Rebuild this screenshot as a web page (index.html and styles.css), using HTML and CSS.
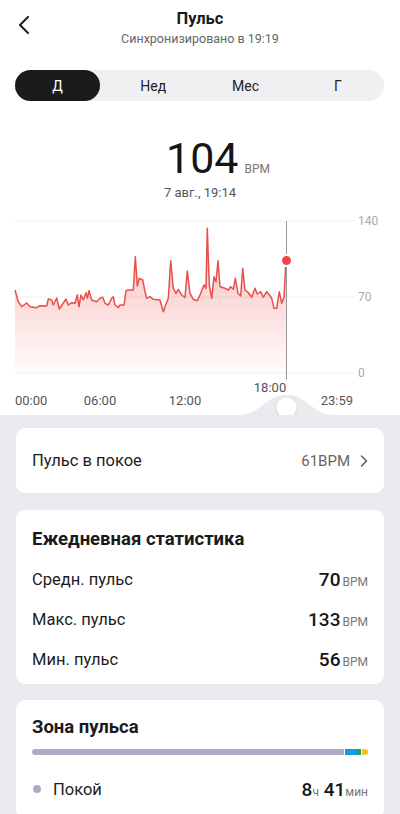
FILE: index.html
```html
<!DOCTYPE html>
<html lang="ru">
<head>
  <meta charset="UTF-8" />
  <meta name="viewport" content="width=device-width, initial-scale=1.0"/>
  <title>Пульс</title>
  <link rel="stylesheet" href="styles.css">
</head>
<body>
  <div class="top">
    <div class="header">
      <button class="back" aria-label="Назад">
        <svg width="12" height="18" viewBox="0 0 12 18"><path d="M10 1 L2 9 L10 17" fill="none" stroke="#1a1a1a" stroke-width="2" stroke-linecap="round" stroke-linejoin="round"/></svg>
      </button>
      <div class="titles">
        <div class="title">Пульс</div>
        <div class="subtitle">Синхронизировано в 19:19</div>
      </div>
      <div></div>
    </div>

    <div class="tabs">
      <div class="tab active">Д</div>
      <div class="tab">Нед</div>
      <div class="tab">Мес</div>
      <div class="tab">Г</div>
    </div>

    <div class="current">
      <div class="big">104<span class="unit">BPM</span></div>
      <div class="date">7 авг., 19:14</div>
    </div>

    <svg class="chart" width="400" height="214" viewBox="0 201 400 214">
      <defs>
        <linearGradient id="fill" x1="0" y1="221" x2="0" y2="373" gradientUnits="userSpaceOnUse">
          <stop offset="0" stop-color="#ef524e" stop-opacity="0.42"/>
          <stop offset="1" stop-color="#ef524e" stop-opacity="0.02"/>
        </linearGradient>
        <filter id="shadow" x="-50%" y="-50%" width="200%" height="200%">
          <feDropShadow dx="0" dy="1" stdDeviation="1.5" flood-color="#000" flood-opacity="0.15"/>
        </filter>
      </defs>
      <line x1="15" y1="221" x2="354" y2="221" class="grid"/>
      <line x1="15" y1="297" x2="354" y2="297" class="grid"/>
      <line x1="15" y1="373" x2="354" y2="373" class="grid"/>
      <text x="358" y="225" class="ylabel">140</text>
      <text x="358" y="301" class="ylabel">70</text>
      <text x="358" y="377" class="ylabel">0</text>

      <path fill="url(#fill)" d="M15,290 L18.3,301.7 L21.7,306.7 L26.7,303 L30,306.7 L36.7,307.7 L40,305.7 L46.7,306 L48.3,299 L51.7,300 L53.3,305 L56.7,298 L59.3,309 L63.3,303 L66,299 L68.3,305 L71.7,302.7 L75,303.3 L77.3,295 L79,306.7 L81,295 L83.3,300 L86,292.7 L87.3,298.3 L89,290.7 L91.7,300 L96.7,301.7 L100,298.3 L102.7,297.3 L105,303.3 L108.3,305 L111.7,298.3 L113.3,296.7 L115,305 L118.3,307.7 L120,305 L124,305 L126,290.7 L128.3,290 L133.3,290 L135.3,256.7 L137.3,286 L139.3,278.3 L142.7,280 L145,291.7 L146.7,298.3 L150,296.7 L153.3,299.3 L160,300 L163.3,311.7 L165,306.7 L168.3,298.3 L170.7,260.7 L173.3,288.3 L176,293.3 L178.3,289.3 L181.7,295 L185,297.3 L187.3,271 L190,293.3 L193.3,299.3 L197.3,300.7 L200,295 L201.7,290.7 L204,285 L206,288.3 L207.3,228.3 L209.3,285 L211.7,298.3 L214,276.7 L216,281.7 L218,260.7 L220,286.7 L225,288.3 L228.3,290 L230.7,286.7 L233.3,289.3 L235.3,278.3 L238,293.3 L240.7,296 L242.7,268.3 L245,290 L248.3,292.7 L251.7,297.3 L255,288.3 L257.3,294 L260.7,291.7 L263.3,297.3 L266.7,291.7 L269.3,295 L271.7,298.3 L274,308.3 L276.7,308.3 L279.3,291.7 L281.7,303.3 L284,297.3 L286,266.7 L286,373 L15,373 Z"/>
      <polyline class="line" points="15,290 18.3,301.7 21.7,306.7 26.7,303 30,306.7 36.7,307.7 40,305.7 46.7,306 48.3,299 51.7,300 53.3,305 56.7,298 59.3,309 63.3,303 66,299 68.3,305 71.7,302.7 75,303.3 77.3,295 79,306.7 81,295 83.3,300 86,292.7 87.3,298.3 89,290.7 91.7,300 96.7,301.7 100,298.3 102.7,297.3 105,303.3 108.3,305 111.7,298.3 113.3,296.7 115,305 118.3,307.7 120,305 124,305 126,290.7 128.3,290 133.3,290 135.3,256.7 137.3,286 139.3,278.3 142.7,280 145,291.7 146.7,298.3 150,296.7 153.3,299.3 160,300 163.3,311.7 165,306.7 168.3,298.3 170.7,260.7 173.3,288.3 176,293.3 178.3,289.3 181.7,295 185,297.3 187.3,271 190,293.3 193.3,299.3 197.3,300.7 200,295 201.7,290.7 204,285 206,288.3 207.3,228.3 209.3,285 211.7,298.3 214,276.7 216,281.7 218,260.7 220,286.7 225,288.3 228.3,290 230.7,286.7 233.3,289.3 235.3,278.3 238,293.3 240.7,296 242.7,268.3 245,290 248.3,292.7 251.7,297.3 255,288.3 257.3,294 260.7,291.7 263.3,297.3 266.7,291.7 269.3,295 271.7,298.3 274,308.3 276.7,308.3 279.3,291.7 281.7,303.3 284,297.3 286,260"/>

      <line x1="286.5" y1="221" x2="286.5" y2="380" class="cursor"/>
      <circle cx="286.5" cy="260.5" r="5.5" fill="#f04646" stroke="#fff" stroke-width="2"/>

      <text x="15" y="405" class="xlabel">00:00</text>
      <text x="100" y="405" class="xlabel" text-anchor="middle">06:00</text>
      <text x="185" y="405" class="xlabel" text-anchor="middle">12:00</text>
      <text x="270" y="392" class="xlabel" text-anchor="middle">18:00</text>
      <text x="353" y="405" class="xlabel" text-anchor="end">23:59</text>

      <path d="M238,415 C262,415 264,395 286.5,395 C309,395 311,415 335,415 Z" fill="#ebebef"/>
      <circle cx="286.5" cy="407.5" r="10" fill="#fff" filter="url(#shadow)"/>
    </svg>
  </div>

  <div class="cards">
    <div class="card row-card">
      <span class="label">Пульс в покое</span>
      <span class="link">61BPM
        <svg width="8" height="12" viewBox="0 0 8 12"><path d="M1.5 1 L6.5 6 L1.5 11" fill="none" stroke="#555" stroke-width="1.4" stroke-linecap="round" stroke-linejoin="round"/></svg>
      </span>
    </div>

    <div class="card stats">
      <div class="card-title">Ежедневная статистика</div>
      <div class="stat"><span class="label">Средн. пульс</span><span class="value">70<small>BPM</small></span></div>
      <div class="stat"><span class="label">Макс. пульс</span><span class="value">133<small>BPM</small></span></div>
      <div class="stat"><span class="label">Мин. пульс</span><span class="value">56<small>BPM</small></span></div>
    </div>

    <div class="card zones">
      <div class="card-title">Зона пульса</div>
      <div class="zone-bar">
        <span class="z-rest"></span>
        <span class="z-blue"></span>
        <span class="z-green"></span>
        <span class="z-yellow"></span>
      </div>
      <div class="stat">
        <span class="label"><i class="dot"></i>Покой</span>
        <span class="value">8<small class="tight">ч</small> 41<small class="tight">мин</small></span>
      </div>
    </div>
  </div>
</body>
</html>
```

FILE: styles.css
```css
* {
  box-sizing: border-box;
}
body {
  margin: 0;
  font-family: Roboto, "Noto Sans", sans-serif;
  background-color: #ebebef;
  color: #1a1a1a;
}
.top {
  background: #ffffff;
}
.header {
  display: grid;
  grid-template-columns: 48px 1fr 48px;
  padding-top: 8px;
}
.back {
  border: none;
  background: none;
  padding: 0;
  height: 22px;
  display: flex;
  align-items: flex-end;
  justify-content: center;
  margin-top: 4px;
}
.titles {
  text-align: center;
}
.title {
  font-size: 16.5px;
  font-weight: 700;
  line-height: 22px;
}
.subtitle {
  font-size: 12.5px;
  color: #666;
  line-height: 18px;
}
.tabs {
  display: grid;
  grid-template-columns: 92px 1fr 1fr 1fr;
  margin: 22px 16px 0 15px;
  height: 31px;
  background: #f0f0f2;
  border-radius: 16px;
}
.tab {
  display: flex;
  align-items: center;
  justify-content: center;
  font-size: 14px;
  color: #222;
}
.tab.active {
  background: #1b1b1b;
  color: #fff;
  border-radius: 16px;
  width: 85px;
}
.current {
  text-align: center;
  margin-top: 32px;
}
.big {
  font-size: 43px;
  line-height: 50px;
  height: 50px;
  color: #151515;
  padding-left: 36px;
}
.unit {
  font-size: 12px;
  line-height: 12px;
  color: #777;
  margin-left: 6px;
}
.date {
  font-size: 13px;
  color: #555;
  line-height: 18px;
  margin-top: 1px;
}
.chart {
  display: block;
  margin-top: -1px;
}
.grid {
  stroke: #efeff1;
  stroke-width: 1;
}
.ylabel {
  font-size: 12px;
  fill: #aaa;
}
.xlabel {
  font-size: 13px;
  fill: #555;
}
.line {
  fill: none;
  stroke: #e8504c;
  stroke-width: 1.5;
  stroke-linejoin: round;
}
.cursor {
  stroke: #9a9a9a;
  stroke-width: 1;
}
.cards {
  padding: 13px 16px 0;
  display: flex;
  flex-direction: column;
  gap: 16px;
}
.card {
  background: #fff;
  border-radius: 9px;
  padding: 0 16px;
}
.row-card {
  height: 65px;
  display: flex;
  align-items: center;
  justify-content: space-between;
  margin-bottom: 1px;
}
.label {
  font-size: 16.5px;
  color: #1c1c1c;
  display: flex;
  align-items: center;
}
.link {
  font-size: 15px;
  color: #666;
  display: flex;
  align-items: center;
  gap: 10px;
}
.card-title {
  font-size: 18.5px;
  font-weight: 700;
  line-height: 24px;
}
.stats {
  padding-top: 17px;
  padding-bottom: 5px;
}
.card-title + .stat {
  margin-top: 8px;
}
.stat {
  height: 40px;
  display: flex;
  align-items: center;
  justify-content: space-between;
}
.value {
  font-size: 19px;
  font-weight: 500;
  color: #151515;
}
.value small {
  font-size: 12px;
  font-weight: 400;
  color: #777;
  margin-left: 2px;
}
.value small.tight {
  margin-left: 0;
}
.zones {
  padding-top: 15px;
  padding-bottom: 10px;
}
.zone-bar {
  display: flex;
  height: 6px;
  margin-top: 10px;
  border-radius: 3px;
  overflow: hidden;
}
.zone-bar + .stat {
  margin-top: 14px;
}
.z-rest {
  flex: 1;
  background: #a9aec6;
}
.z-blue {
  width: 12px;
  margin-left: 1px;
  background: #1a9ad6;
}
.z-green {
  width: 4px;
  background: #17a37c;
}
.z-yellow {
  width: 6px;
  margin-left: 1px;
  background: #f4c31d;
}
.dot {
  width: 8px;
  height: 8px;
  border-radius: 50%;
  background: #a9aec6;
  margin-right: 12px;
  margin-left: 1px;
}
```
